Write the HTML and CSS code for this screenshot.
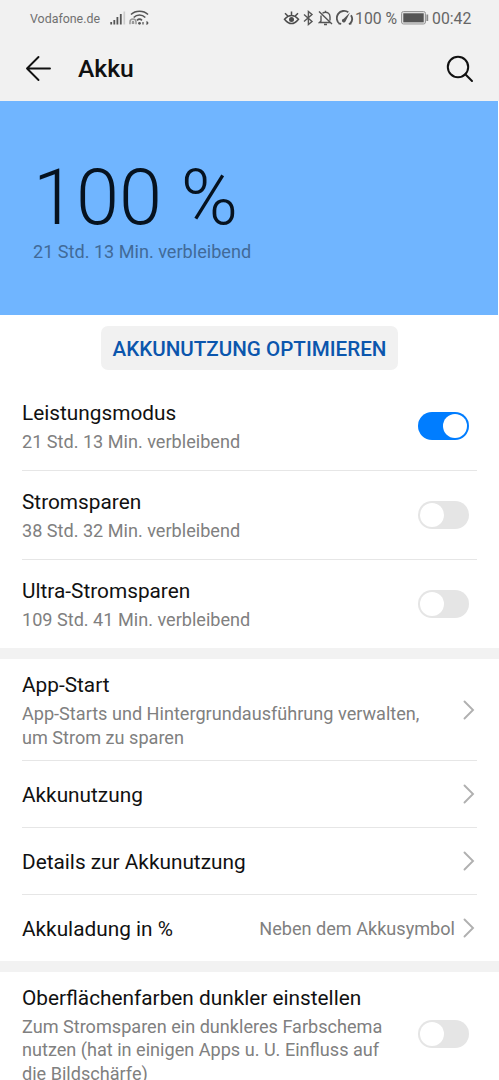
FILE: index.html
```html
<!DOCTYPE html>
<html lang="de">
<head>
<meta charset="utf-8">
<title>Akku</title>
<link rel="stylesheet" href="styles.css">
</head>
<body>
<div class="screen">
  <div class="status">
    <span class="carrier">Vodafone.de</span>
    <svg class="signal" width="16" height="16" viewBox="0 0 16 16"><path d="M1.200 12v2.500M4.300 10v4.500M7.400 7v7.500M10.800 4v10.500" stroke="#555" stroke-width="1.800"/><path d="M14.300 1.500v13" stroke="#ccc" stroke-width="1.700"/></svg>
    <svg class="wifi" width="20" height="16" viewBox="0 0 20 16" fill="none" stroke="#555" stroke-width="1.600"><path d="M2 4.500C6.500 .2 14.500 .2 19 4.500M4.700 7.500C8 4.200 13 4.200 16.300 7.500M8 10.300Q10.500 8 13 10.300"/><path d="M1 14.200V12a3 3 0 0 1 6 0v2.200M3.500 14v-2a.5.5 0 0 1 1 0v2" stroke="#999" stroke-width="1.500"/><circle cx="10.500" cy="13.300" r="1.400" fill="#555" stroke="none"/><path d="M14 12v2.500M17.500 11.500l1.300 1.500-1.300 1.500" stroke-width="1.300"/></svg>
    <div class="status-right">
      <svg class="eye" width="17" height="16" viewBox="0 0 17 16" fill="none" stroke="#4c4c4c" stroke-width="1.500"><path d="M1.500 9.200Q8.500 2 15.500 9.200Q8.500 18 1.500 9.200zM8.500 5.500V1.500M4.800 6L2 3.200M12.200 6l2.800-2.800"/><circle cx="8.500" cy="9.400" r="2.500" fill="#4c4c4c" stroke="none"/></svg>
      <svg class="bt" width="11" height="16" viewBox="0 0 11 16" fill="none" stroke="#555" stroke-width="1.400"><path d="M1 4.500l8 7L5.400 14.500V1.500L9 4.500l-8 7"/></svg>
      <svg class="bell" width="15" height="16" viewBox="0 0 15 16" fill="none" stroke="#555" stroke-width="1.400"><path d="M1 1.500L14 14M3 5.500V11L1.500 12.500H12M4.500 3.300Q7.500 1.200 10.500 3.300Q12 4.500 12 7v3.500M7.500 2V.7M6 14.500h3"/></svg>
      <svg class="gauge" width="18" height="16" viewBox="0 0 18 16" fill="none" stroke="#555" stroke-width="1.800"><path d="M3.800 14A7 7 0 0 1 12.300 2.300M15 5.300A7 7 0 0 1 13.800 14M2.500 13.300l2.700.5M15.500 13.300l-2.700.5"/><path d="M14 2.500L9.600 11.300A1.900 1.900 0 1 1 7.700 8.800z" fill="#555" stroke="none"/></svg>
      <span class="pct">100 %</span>
      <svg class="battery" width="28" height="14" viewBox="0 0 28 14"><rect x=".5" y=".5" width="24" height="12.500" rx="2" fill="#ddd" stroke="#999"/><rect x="2.300" y="2.300" width="20.400" height="9" fill="#555"/><path d="M26.300 3.500v6.500" stroke="#888" stroke-width="1.800"/></svg>
      <span class="time">00:42</span>
    </div>
  </div>
  <header class="appbar">
    <svg class="back" width="28" height="28" viewBox="0 0 28 28" fill="none" stroke="#111" stroke-width="1.900" stroke-linecap="round" stroke-linejoin="round"><path d="M25 13.500H2M13.500 2L2 13.500l11.500 11.500"/></svg>
    <h1>Akku</h1>
    <svg class="search" width="28" height="28" viewBox="0 0 28 28" fill="none" stroke="#111" stroke-width="2" stroke-linecap="round"><circle cx="12" cy="12" r="10.200"/><path d="M19.300 19.300L26 26"/></svg>
  </header>
  <section class="hero">
    <div class="level">100 %</div>
    <div class="remaining">21 Std. 13 Min. verbleibend</div>
  </section>
  <section class="modes">
    <button class="optimize">AKKUNUTZUNG OPTIMIEREN</button>
    <div class="row mode"><div class="text"><h2>Leistungsmodus</h2><p>21 Std. 13 Min. verbleibend</p></div><span class="switch on"></span></div>
    <div class="row mode"><div class="text"><h2>Stromsparen</h2><p>38 Std. 32 Min. verbleibend</p></div><span class="switch"></span></div>
    <div class="row mode"><div class="text"><h2>Ultra-Stromsparen</h2><p>109 Std. 41 Min. verbleibend</p></div><span class="switch"></span></div>
  </section>
  <section class="group">
    <div class="row launch"><div class="text"><h2>App-Start</h2><p>App-Starts und Hintergrundausführung verwalten,<br>um Strom zu sparen</p></div><svg class="chev" width="12" height="20" viewBox="0 0 12 20"><path d="M1.500 1.500L10 10l-8.500 8.500"/></svg></div>
    <div class="row link"><h2>Akkunutzung</h2><svg class="chev" width="12" height="20" viewBox="0 0 12 20"><path d="M1.500 1.500L10 10l-8.500 8.500"/></svg></div>
    <div class="row link"><h2>Details zur Akkunutzung</h2><svg class="chev" width="12" height="20" viewBox="0 0 12 20"><path d="M1.500 1.500L10 10l-8.500 8.500"/></svg></div>
    <div class="row link"><h2>Akkuladung in %</h2><span class="value">Neben dem Akkusymbol</span><svg class="chev" width="12" height="20" viewBox="0 0 12 20"><path d="M1.500 1.500L10 10l-8.500 8.500"/></svg></div>
  </section>
  <section class="group">
    <div class="row dark"><div class="text"><h2>Oberflächenfarben dunkler einstellen</h2><p>Zum Stromsparen ein dunkleres Farbschema<br>nutzen (hat in einigen Apps u. U. Einfluss auf<br>die Bildschärfe)</p></div><span class="switch"></span></div>
  </section>
</div>
</body>
</html>
```

FILE: styles.css
```css
* { box-sizing: border-box; }
body { margin: 0; background: #fff; font-family: Roboto, sans-serif; color: #111; }
h1, h2, p { margin: 0; white-space: nowrap; }
svg { display: block; flex: none; }
.screen { height: 1080px; overflow: hidden; }
.status { height: 36px; background: #f1f1f1; display: flex; align-items: center; padding: 0 27px 0 30px; color: #666; white-space: nowrap; }
.carrier { font-size: 12.400px; width: 70px; color: #707070; }
.signal { margin-left: 10px; }
.wifi { margin-left: 3px; }
.status-right { margin-left: auto; display: flex; align-items: center; }
.bt { margin-left: 3px; }
.bell { margin-left: 4px; }
.gauge { margin-left: 3px; }
.pct { font-size: 15.800px; width: 42px; margin-left: 1px; }
.battery { margin-left: 4px; }
.time { font-size: 15.800px; width: 40px; margin-left: 3px; }
.appbar { height: 65px; background: #f1f1f1; display: flex; align-items: center; padding: 0 25px; }
.appbar h1 { font-size: 24.700px; font-weight: 500; line-height: 30px; margin: 1px 0 0 25px; }
.search { margin-left: auto; }
.hero { height: 214px; margin-right: 1px; background: #70b5ff; padding: 53px 33px 0; }
.level { font-size: 77.500px; font-weight: 300; line-height: 88px; color: #06121f; white-space: nowrap; }
.remaining { font-size: 18.100px; line-height: 20px; color: #416a98; }
.modes { padding-top: 11px; }
.optimize { display: block; width: 297px; height: 44px; margin: 0 0 11px 101px; padding: 2px 0 0; border: 0; border-radius: 7px; background: #f1f1f1; color: #0b56ad; font: 500 20.600px Roboto, sans-serif; white-space: nowrap; }
.row { display: flex; align-items: center; margin: 0 22px; border-bottom: 1px solid #e6e6e6; }
.row:last-child { border-bottom: 0; }
.text { flex: 1; min-width: 0; }
h2 { font-size: 20.800px; font-weight: 400; line-height: 28px; }
p { font-size: 18.100px; line-height: 24px; color: #808080; }
.mode { height: 89px; padding-right: 8px; }
.mode .text { padding-top: 1px; }
.mode p { margin-top: 3px; }
.switch { width: 51px; height: 28px; border-radius: 14px; background: #e5e5e5; padding: 2px; flex: none; display: flex; }
.switch::before { content: ""; width: 24px; height: 24px; border-radius: 50%; background: #fff; }
.switch.on { background: #007dff; justify-content: flex-end; }
.modes .optimize + .mode { height: 90px; }
.modes .mode:last-child { height: 88px; }
.group { border-top: 11px solid #f2f2f2; }
.link { height: 67px; }
.link:last-child { height: 66px; }
.link h2 { padding-top: 1px; }
.launch { height: 102px; }
.launch .text { padding-top: 1px; }
.launch p { margin-top: 3px; }
.dark { height: 124px; padding-right: 8px; }
.dark .text { padding-top: 1px; }
.dark p { margin-top: 3px; line-height: 23.600px; }
.chev { margin: 0 2px 0 auto; fill: none; stroke: #b0b0b0; stroke-width: 1.900; stroke-linecap: round; }
.value { margin-left: auto; font-size: 18.100px; color: #808080; white-space: nowrap; }
.value + .chev { margin-left: 8px; }
```
